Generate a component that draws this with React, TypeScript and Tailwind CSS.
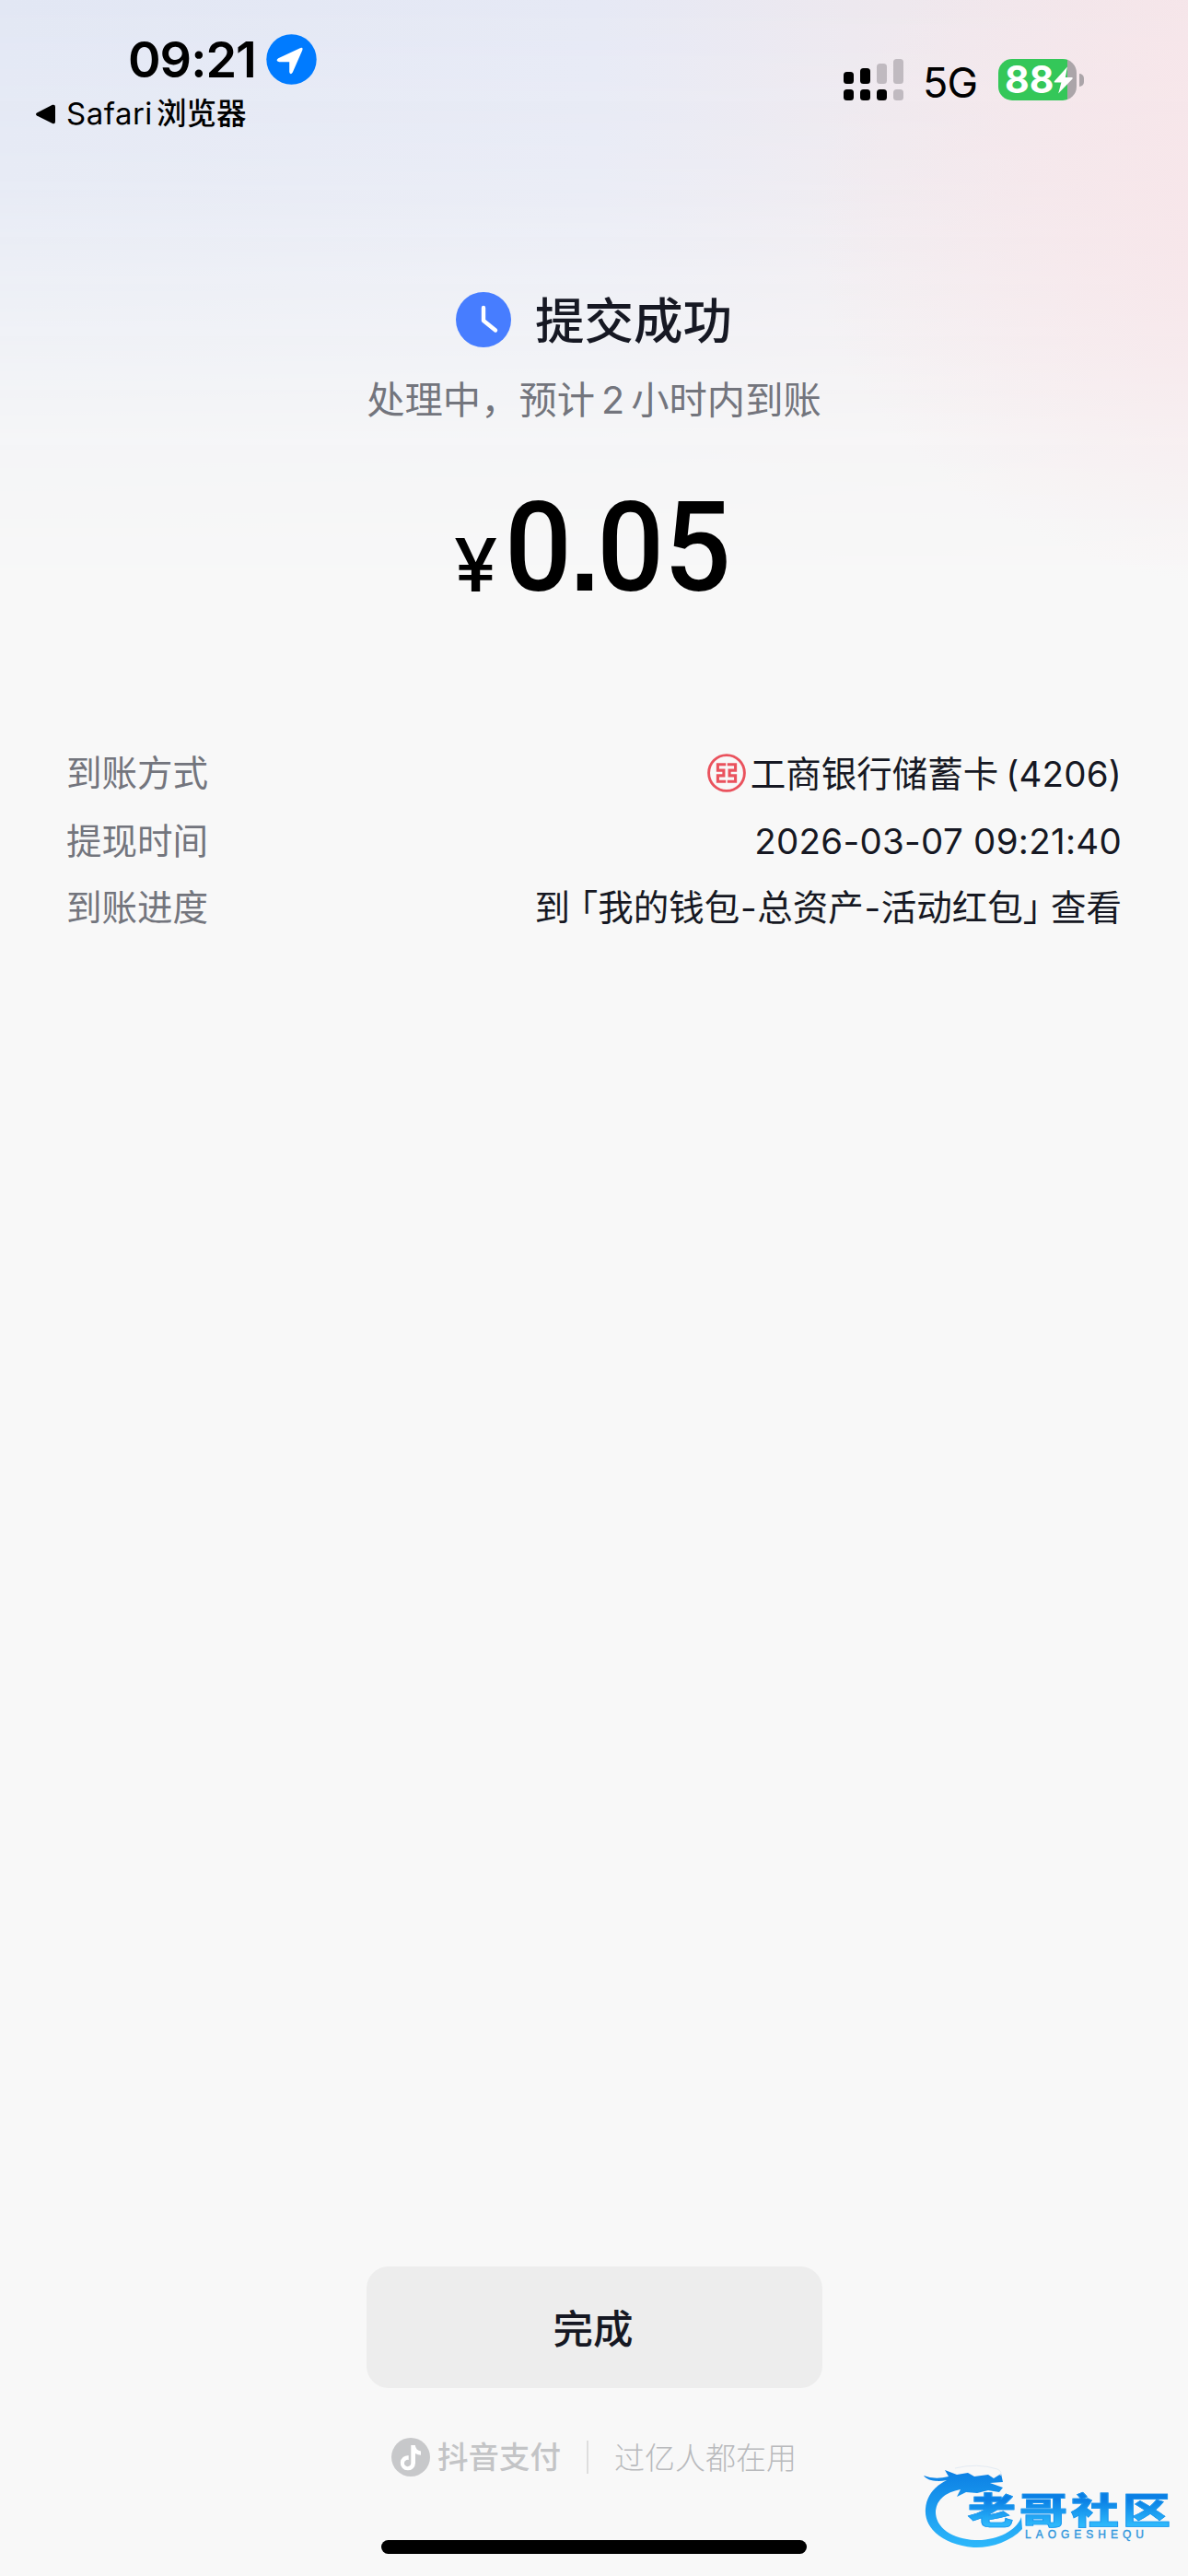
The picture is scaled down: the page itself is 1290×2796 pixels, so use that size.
import React from 'react';

const LocationIcon: React.FC = () => (
  <svg className="size-[55px]" viewBox="0 0 55 55">
    <circle cx="27.5" cy="27.5" r="27.2" fill="#007bff" />
    <path
      d="M13.2 26.2 36.8 15.2Q40.6 13.8 39.2 17.8L28.8 41.6Q26.4 45 25.2 41.2V30.2H14.2Q9.6 29 13.2 26.2Z"
      fill="#fff"
    />
  </svg>
);

const SignalIcon: React.FC = () => (
  <svg className="h-[45px] w-[65px]" viewBox="0 0 65 45">
    <g fill="#000">
      <rect x="0" y="14" width="11" height="13" rx="3.5" />
      <rect x="18" y="10" width="11" height="17" rx="3.5" />
      <rect x="0" y="33" width="11" height="12" rx="3.5" />
      <rect x="18" y="33" width="11" height="12" rx="3.5" />
      <rect x="36" y="33" width="11" height="12" rx="3.5" />
    </g>
    <g fill="#c0bac0">
      <rect x="36" y="5" width="11" height="22" rx="3.5" />
      <rect x="54" y="0" width="11" height="27" rx="3.5" />
      <rect x="54" y="33" width="11" height="12" rx="3.5" />
    </g>
  </svg>
);

const Battery: React.FC = () => (
  <div className="flex items-center gap-[3px]">
    <div className="relative flex h-[45px] w-[85px] items-center rounded-[15px] bg-gradient-to-r from-[#34c759] from-[88%] to-[#aba5a9] to-[88%] pl-[7px]">
      <span className="text-[41px] leading-[45px] font-bold text-white">88</span>
      <svg className="absolute top-2 left-[60px] h-[30px] w-[22px]" viewBox="0 0 22 30">
        <path d="M15 0.5 0.8 16.2Q0.2 17.6 1.6 17.6H8.4L5.2 29.4 20.6 13.6Q21.4 12.2 19.8 12H12.8Z" fill="#fff" />
      </svg>
    </div>
    <div className="h-[14px] w-[5px] rounded-r-full bg-[#aba5a9]" />
  </div>
);

const BankIcon: React.FC = () => (
  <svg className="size-[42px]" viewBox="0 0 42 42" fill="none" stroke="#ea525d">
    <circle cx="21" cy="21" r="19.4" strokeWidth="2.9" />
    <path
      d="M20.2 11.7H11.4V18.1H17.9V23.9H11.4V30.3H20.2M21.8 11.7H30.6V18.1H24.1V23.9H30.6V30.3H21.8"
      strokeWidth="3.1"
    />
  </svg>
);

const DouyinIcon: React.FC = () => (
  <svg className="size-[42px]" viewBox="0 0 42 42">
    <circle cx="21" cy="21" r="21" fill="#c7c8ca" />
    <path
      d="M21.3 8H25.8Q26.4 13.6 32 14.4V18.8Q28.6 18.8 26 17V27.4A8.1 8.1 0 1 1 18.7 19.2V24A3.7 3.7 0 1 0 21.3 27.2Z"
      fill="#fff"
    />
  </svg>
);

const Watermark: React.FC = () => (
  <div className="absolute right-[19px] bottom-[29px] h-[92px] w-[270px]">
    <svg className="h-full w-full" viewBox="0 0 270 92">
      <defs>
        <linearGradient id="dragon" x1="0" y1="0" x2="0" y2="1">
          <stop offset="0" stopColor="#0b7fe4" />
          <stop offset="1" stopColor="#2db8fb" />
        </linearGradient>
      </defs>
      <path
        d="M2 12Q14 17 29 13L25 6 38 11 50 9 57 13 72 11 78 15 86 10 88 19 74 20 88 25 84 30 72 28 60 31 48 30 38 35 42 27Q17 32 15 50C14 72 40 83 65 82 88 80 104 69 108 57L109 70C96 84 74 91 56 90 24 87 2 70 4 48 5 33 15 23 27 17 17 19 6 18 2 12Z"
        fill="url(#dragon)"
      />
      <path d="M36 4Q60 -2 82 5 88 8 85 12" fill="none" stroke="#e3ebf3" strokeWidth="1" />
    </svg>
    <div className="absolute top-[30px] left-[50px] origin-top-left scale-y-[0.74] bg-gradient-to-b from-[#0b7fe4] from-20% to-[#2db8fb] to-85% bg-clip-text text-[52px] leading-[56px] font-black tracking-[4px] whitespace-nowrap text-transparent [-webkit-text-stroke:1px_#1e97ee]">
      老哥社区
    </div>
    <div className="absolute top-[69px] left-[112px] font-['Liberation_Sans',sans-serif] text-[12px] leading-[14px] tracking-[5px] text-[#2f97dd] [-webkit-text-stroke:0.4px_#2f97dd]">
      LAOGESHEQU
    </div>
  </div>
);

type RowProps = { label: string; className: string; children: React.ReactNode };

const DetailRow: React.FC<RowProps> = ({ label, className, children }) => (
  <div className={`flex items-center justify-between ${className}`}>
    <span className="pt-px text-[#73757d]">{label}</span>
    <div className="flex items-center">{children}</div>
  </div>
);

export default function App() {
  return (
    <div className="relative flex h-[2796px] w-[1290px] flex-col overflow-hidden bg-[#f8f8f8] font-['Inter','Noto_Sans_CJK_SC',sans-serif] text-[#161823]">
      {/* soft blue sky with a pink glow coming in from the right */}
      <div className="absolute inset-x-0 top-0 h-[640px] bg-[linear-gradient(to_right,#e2e7f4_0%,#e6e9f5_50%,#eee8ee_75%,#f5e6ea_100%)] mask-[linear-gradient(to_bottom,#000_0%,#000000c8_30%,#00000078_50%,#00000020_75%,transparent_100%)]" />
      <div className="absolute inset-x-0 top-0 h-[640px] bg-[radial-gradient(ellipse_40%_62%_at_108%_38%,#f7e5e9_0%,#f7e5e9b0_30%,#f7e5e900_100%)]" />

      <header className="relative flex h-[317px] justify-between text-black">
        <div className="pt-[37px] pl-[39px]">
          <div className="flex h-[55px] items-center pl-[100px]">
            <span className="w-[150px] text-[54px] leading-none font-semibold tracking-[-1px]">09:21</span>
            <LocationIcon />
          </div>
          <div className="mt-[9px] flex h-[46px] items-center">
            <svg className="mr-3 h-[22px] w-[21px]" viewBox="0 0 21 22">
              <path d="M1 9.6 18 .8Q21 0 21 3V19Q21 22 18 21L1 12.4Q-1 11 1 9.6Z" />
            </svg>
            <span className="mr-1 text-[33px] tracking-[0.5px]">Safari</span>
            <span className="text-[32.5px] font-medium">浏览器</span>
          </div>
        </div>
        <div className="mt-16 mr-[113px] flex h-[45px] items-center">
          <SignalIcon />
          <span className="mr-[23px] ml-[21px] pt-[5px] text-[45px] leading-none tracking-[-1px]">5G</span>
          <Battery />
        </div>
      </header>

      <main className="relative flex flex-col items-center">
        <div className="flex h-[60px] items-center gap-[26px]">
          <svg className="size-[60px]" viewBox="0 0 60 60">
            <circle cx="30" cy="30" r="30" fill="#477dff" />
            <path d="M30 17V31L43 41.5" fill="none" stroke="#fff" strokeWidth="4.4" strokeLinecap="round" strokeLinejoin="round" />
          </svg>
          <h1 className="pt-1 text-[53.5px] leading-none font-medium">提交成功</h1>
        </div>
        <p className="mt-[28px] flex h-[60px] items-center text-[41.3px] text-[#73757d]">
          处理中，预计<span className="mx-[7px]">2</span>小时内到账
        </p>
        <div className="mt-[81px] flex h-[98px] w-[304px] items-end text-black">
          <span className="w-[55px] shrink-0 origin-left scale-x-[1.06] text-[80px] leading-[62px] font-medium">¥</span>
          <span className="shrink-0 origin-left scale-x-[0.943] font-['Roboto',sans-serif] text-[136px] leading-[98px] font-medium">
            0<span className="-mr-[3px] -ml-[2px] font-['Liberation_Sans',sans-serif] text-[122px] leading-[0] font-bold">.</span>05
          </span>
        </div>
      </main>

      <section className="relative mt-[157px] flex flex-col px-[72px] text-[38.5px]">
        <DetailRow label="到账方式" className="h-[76px]">
          <span className="mr-[5px]">
            <BankIcon />
          </span>
          <span className="pt-[3px]">工商银行储蓄卡</span>
          <span className="ml-2 pt-[3px] tracking-[0.2px]">(4206)</span>
        </DetailRow>
        <DetailRow label="提现时间" className="h-[73px]">
          <span className="pt-px tracking-[0.28px]">2026-03-07 09:21:40</span>
        </DetailRow>
        <DetailRow label="到账进度" className="h-[71px]">
          <span className="[font-feature-settings:'halt']">
            到<span className="ml-[11px]">「</span>我的钱包<span className="mx-[0.6px]">-</span>总资产<span className="mx-[0.6px]">-</span>活动红包<span className="mr-[11px]">」</span>查看
          </span>
        </DetailRow>
      </section>

      <footer className="relative mt-auto flex flex-col items-center pb-6">
        <button className="h-[132px] w-[495px] rounded-3xl bg-[#ededed] pt-1.5 pr-0.5 text-[43.5px] font-medium">完成</button>
        <div className="mt-[54px] flex h-[42px] items-center text-[33px] leading-none text-[#b9babd]">
          <DouyinIcon />
          <span className="ml-2 pt-0.5 text-[33.5px] font-medium text-[#c3c4c6]">抖音支付</span>
          <span className="mx-[28px] h-9 w-0.5 bg-[#dedede]" />
          <span className="pt-0.5 font-light">过亿人都在用</span>
        </div>
        <div className="mt-[69px] h-[15px] w-[462px] rounded-full bg-black" />
      </footer>

      <Watermark />
    </div>
  );
}
